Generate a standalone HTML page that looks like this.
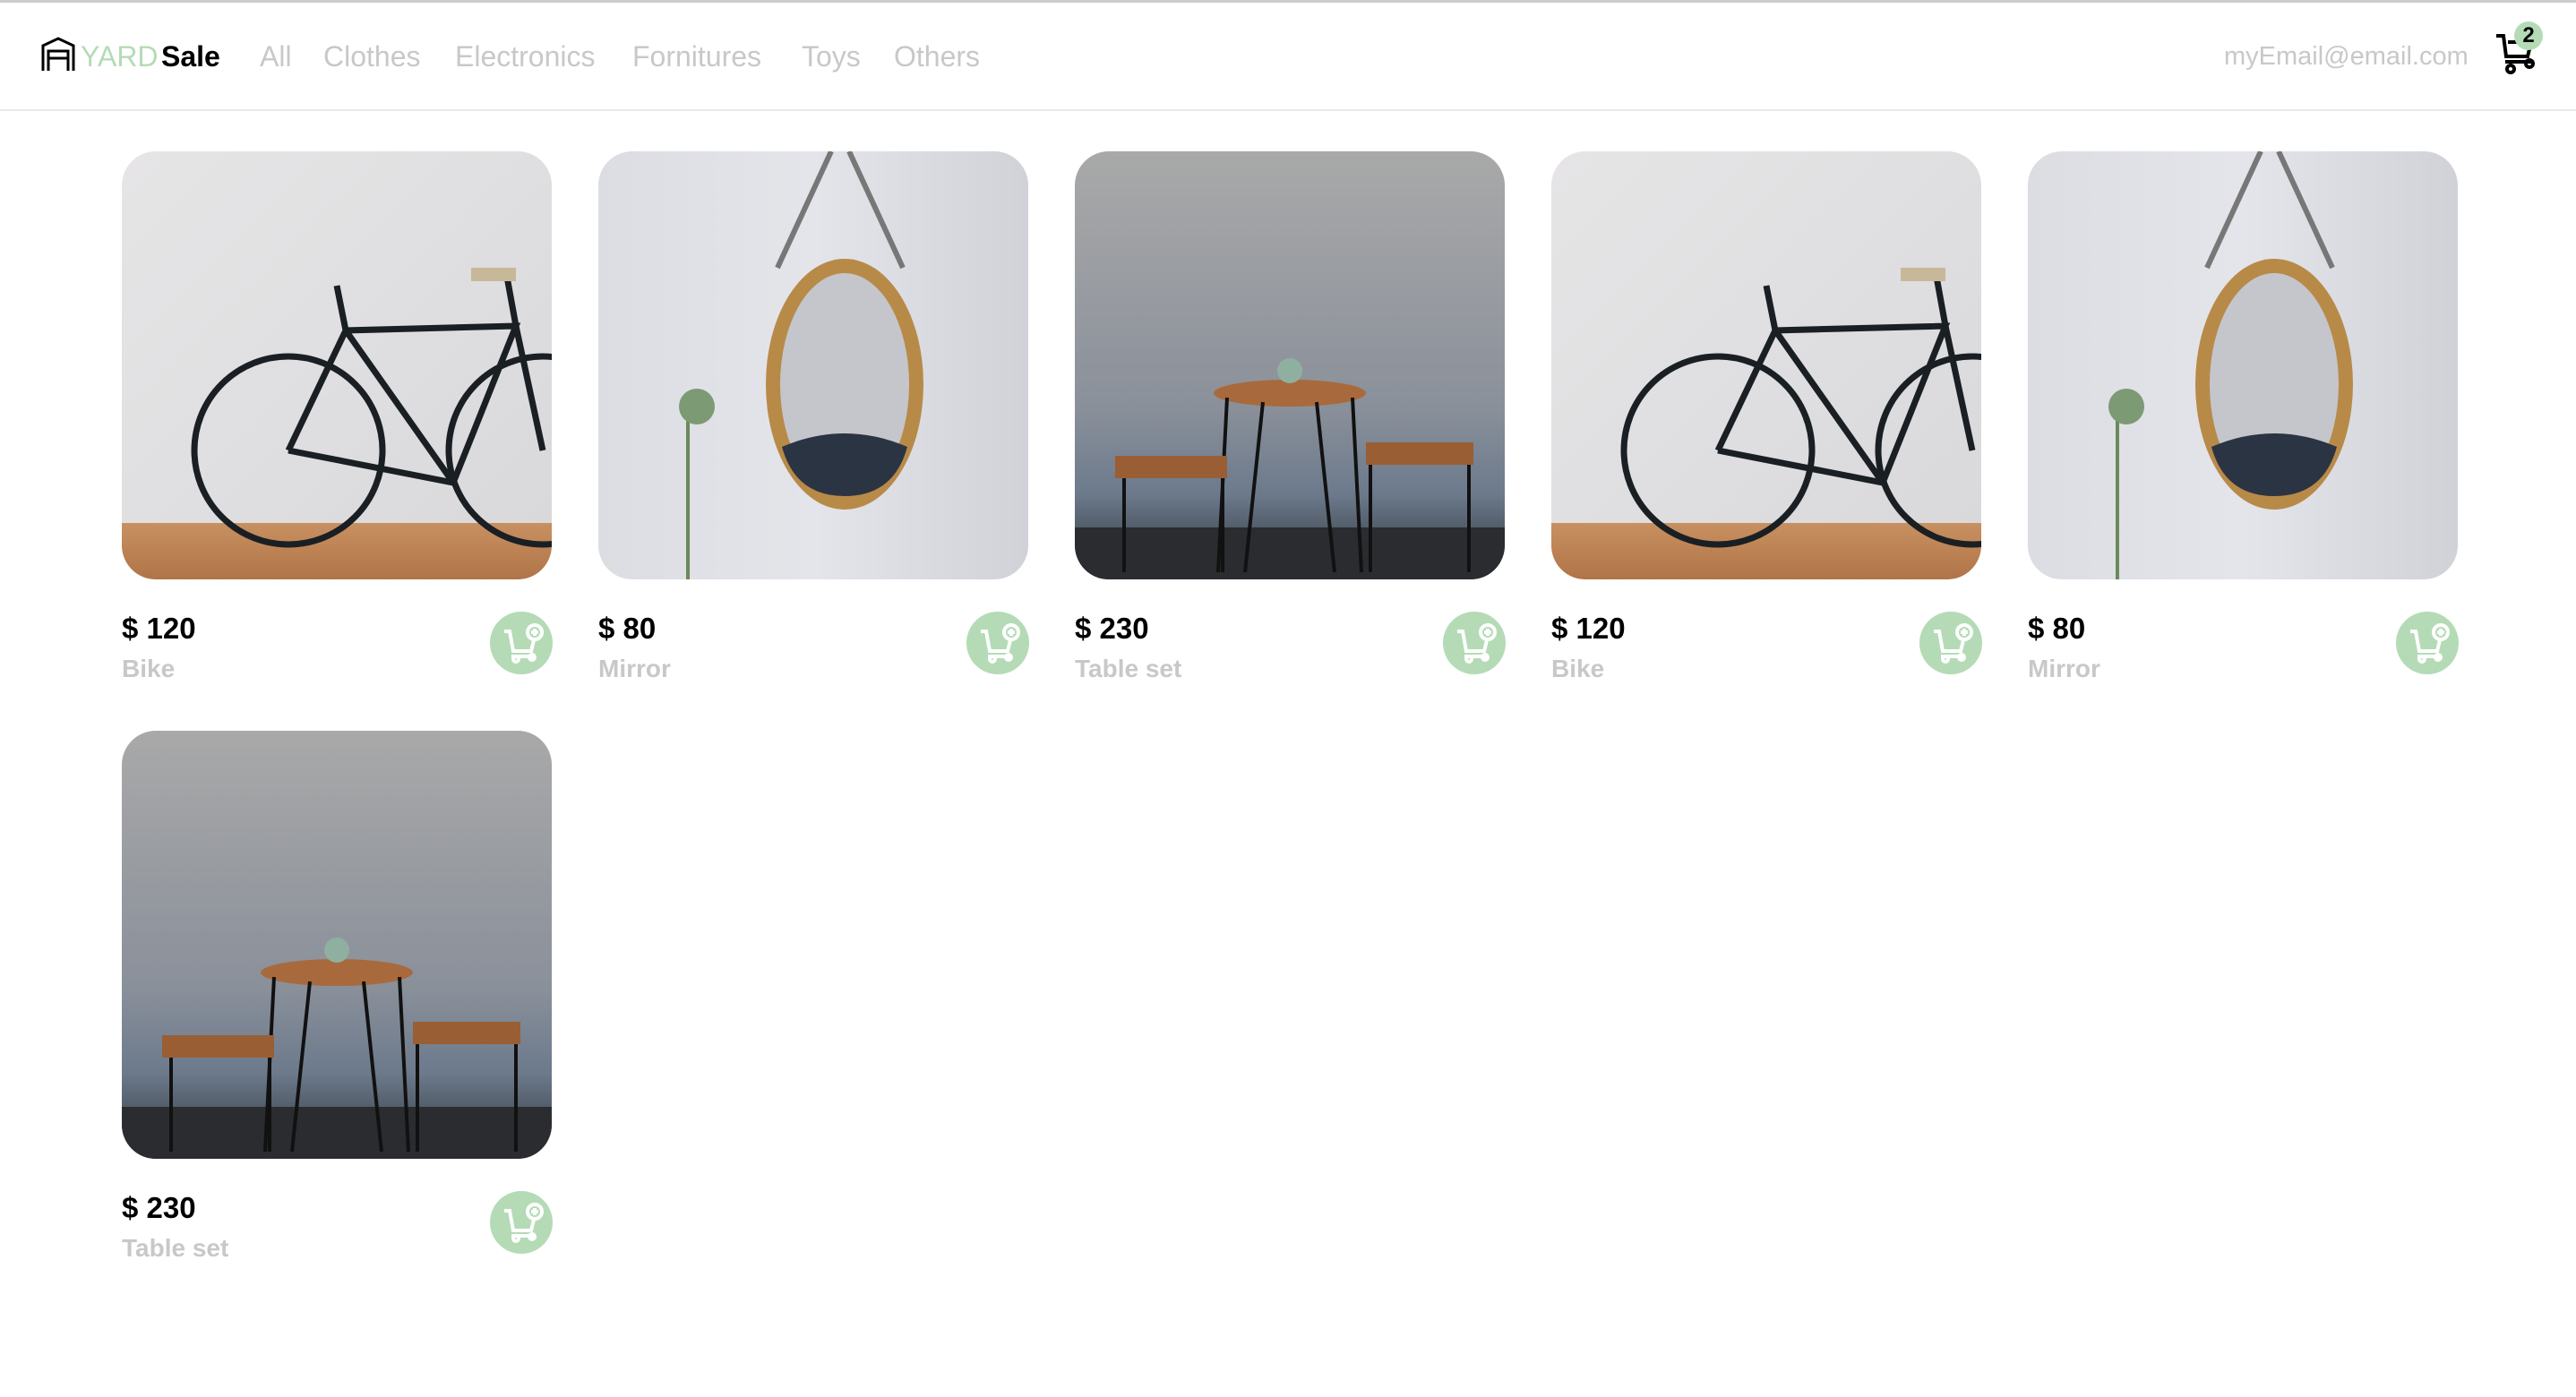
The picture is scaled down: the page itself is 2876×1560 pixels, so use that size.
<!DOCTYPE html>
<html><head><meta charset="utf-8"><style>
*{margin:0;padding:0;box-sizing:border-box}
body{width:2876px;height:1560px;background:#fff;font-family:"Liberation Sans",sans-serif;position:relative;overflow:hidden}
.top{position:absolute;left:0;top:0;width:2876px;height:3px;background:#ccc}
.hdr{position:absolute;left:0;top:3px;width:2876px;height:121px;border-bottom:2px solid #e8e8e8}
.t{position:absolute;top:40px;font-size:32px;color:#c8c8c8;line-height:40px;white-space:nowrap}
.card{position:absolute;width:480px}
.img{width:480px;height:478px;border-radius:38px;overflow:hidden}
.img svg{display:block}
.price{position:absolute;left:0;top:514px;font-size:33px;font-weight:bold;color:#000}
.name{position:absolute;left:0;top:562px;font-size:28px;font-weight:bold;color:#c8c8c8}
.btn{position:absolute;left:411px;top:514px;width:70px;height:70px;border-radius:50%;background:#b4dbb6}
</style></head><body>
<div class="top"></div>
<div class="hdr">
<svg style="position:absolute;left:46px;top:38px" width="38" height="40" viewBox="0 0 38 40" fill="none" stroke="#000" stroke-width="3"><path d="M2 38V10L19 2L36 10V38M8 38V16H30V38M8 24H30"/></svg>
<div class="t" style="left:90px;color:#b4dbb6">YARD</div>
<div class="t" style="left:180px;color:#000;font-weight:bold">Sale</div>
<div class="t" style="left:290px">All</div>
<div class="t" style="left:361px">Clothes</div>
<div class="t" style="left:508px">Electronics</div>
<div class="t" style="left:706px">Fornitures</div>
<div class="t" style="left:895px">Toys</div>
<div class="t" style="left:998px">Others</div>
<div class="t" style="left:2483px;font-size:29px">myEmail@email.com</div>
<svg style="position:absolute;left:2784px;top:32px" width="50" height="50" viewBox="0 0 50 50" fill="none" stroke="#000" stroke-width="4"><path d="M3 5H11L14 28H38L42 12H16"/><path d="M13 34H43"/><circle cx="19" cy="42" r="4"/><circle cx="40" cy="36" r="4"/></svg>
<div style="position:absolute;left:2807px;top:21px;width:32px;height:32px;border-radius:50%;background:#b4dbb6;font-weight:bold;font-size:24px;text-align:center;line-height:32px">2</div>
</div>

<svg width="0" height="0" style="position:absolute"><defs>
<linearGradient id="wall" x1="0" y1="0" x2="1" y2="1"><stop offset="0" stop-color="#e6e5e6"/><stop offset="1" stop-color="#d8d8db"/></linearGradient>
<linearGradient id="wood" x1="0" y1="0" x2="0" y2="1"><stop offset="0" stop-color="#c89060"/><stop offset="1" stop-color="#b07448"/></linearGradient>
<linearGradient id="mwall" x1="0" y1="0" x2="1" y2="0"><stop offset="0" stop-color="#dcdde2"/><stop offset=".5" stop-color="#e4e5ea"/><stop offset="1" stop-color="#d0d2d8"/></linearGradient>
<linearGradient id="cwall" x1="0" y1="0" x2="0" y2="1"><stop offset="0" stop-color="#a9a9a9"/><stop offset=".6" stop-color="#8a909a"/><stop offset=".8" stop-color="#6c7a8c"/><stop offset="1" stop-color="#2e3338"/></linearGradient>
<g id="bike"><rect width="480" height="478" fill="url(#wall)"/><rect y="415" width="480" height="63" fill="url(#wood)"/>
<g fill="none" stroke="#1a1f24" stroke-width="7"><circle cx="186" cy="334" r="105"/><circle cx="470" cy="334" r="105"/><path d="M186 334L250 200L440 195L370 370L186 334M250 200L370 370M440 195L470 334M240 150L250 200M430 140L440 195"/></g><path d="M390 130h50v15h-50z" fill="#c8b89a"/></g>
<g id="mirror"><rect width="480" height="478" fill="url(#mwall)"/><path d="M260 0L200 130M280 0L340 130" stroke="#777" stroke-width="6"/><ellipse cx="275" cy="260" rx="88" ry="140" fill="#b88a48"/><ellipse cx="275" cy="260" rx="72" ry="124" fill="#c4c6cc"/><path d="M205 330Q275 300 345 330Q330 385 275 385Q220 385 205 330z" fill="#2b3442"/><path d="M100 280v198" stroke="#6a8a5a" stroke-width="4"/><circle cx="110" cy="285" r="20" fill="#7c9a74"/></g>
<g id="table"><rect width="480" height="478" fill="url(#cwall)"/><rect y="420" width="480" height="58" fill="#2a2c30"/><ellipse cx="240" cy="270" rx="85" ry="15" fill="#a86a3c"/><g stroke="#111" stroke-width="4"><path d="M170 275L160 470M310 275L320 470M210 280L190 470M270 280L290 470M55 360V470M165 360V470M330 335V470M440 335V470"/></g><rect x="45" y="340" width="125" height="25" fill="#9a5e34"/><rect x="325" y="325" width="120" height="25" fill="#9a5e34"/><circle cx="240" cy="245" r="14" fill="#8fb0a0"/></g>
<g id="cartplus" fill="none" stroke="#fff" stroke-width="4"><path d="M16 22H22L26 44H46L49 32"/><path d="M24 50H50"/><circle cx="29" cy="53" r="3"/><circle cx="47" cy="51" r="3"/><circle cx="50" cy="23" r="8"/><path d="M50 19V27M46 23H54"/></g>
</defs></svg>

<div class="card" style="left:136px;top:169px"><div class="img"><svg width="480" height="478"><use href="#bike"/></svg></div><div class="price">$ 120</div><div class="name">Bike</div><div class="btn"><svg width="70" height="70" viewBox="0 0 70 70"><use href="#cartplus"/></svg></div></div>
<div class="card" style="left:668px;top:169px"><div class="img"><svg width="480" height="478"><use href="#mirror"/></svg></div><div class="price">$ 80</div><div class="name">Mirror</div><div class="btn"><svg width="70" height="70" viewBox="0 0 70 70"><use href="#cartplus"/></svg></div></div>
<div class="card" style="left:1200px;top:169px"><div class="img"><svg width="480" height="478"><use href="#table"/></svg></div><div class="price">$ 230</div><div class="name">Table set</div><div class="btn"><svg width="70" height="70" viewBox="0 0 70 70"><use href="#cartplus"/></svg></div></div>
<div class="card" style="left:1732px;top:169px"><div class="img"><svg width="480" height="478"><use href="#bike"/></svg></div><div class="price">$ 120</div><div class="name">Bike</div><div class="btn"><svg width="70" height="70" viewBox="0 0 70 70"><use href="#cartplus"/></svg></div></div>
<div class="card" style="left:2264px;top:169px"><div class="img"><svg width="480" height="478"><use href="#mirror"/></svg></div><div class="price">$ 80</div><div class="name">Mirror</div><div class="btn"><svg width="70" height="70" viewBox="0 0 70 70"><use href="#cartplus"/></svg></div></div>
<div class="card" style="left:136px;top:816px"><div class="img"><svg width="480" height="478"><use href="#table"/></svg></div><div class="price">$ 230</div><div class="name">Table set</div><div class="btn"><svg width="70" height="70" viewBox="0 0 70 70"><use href="#cartplus"/></svg></div></div>
</body></html>
